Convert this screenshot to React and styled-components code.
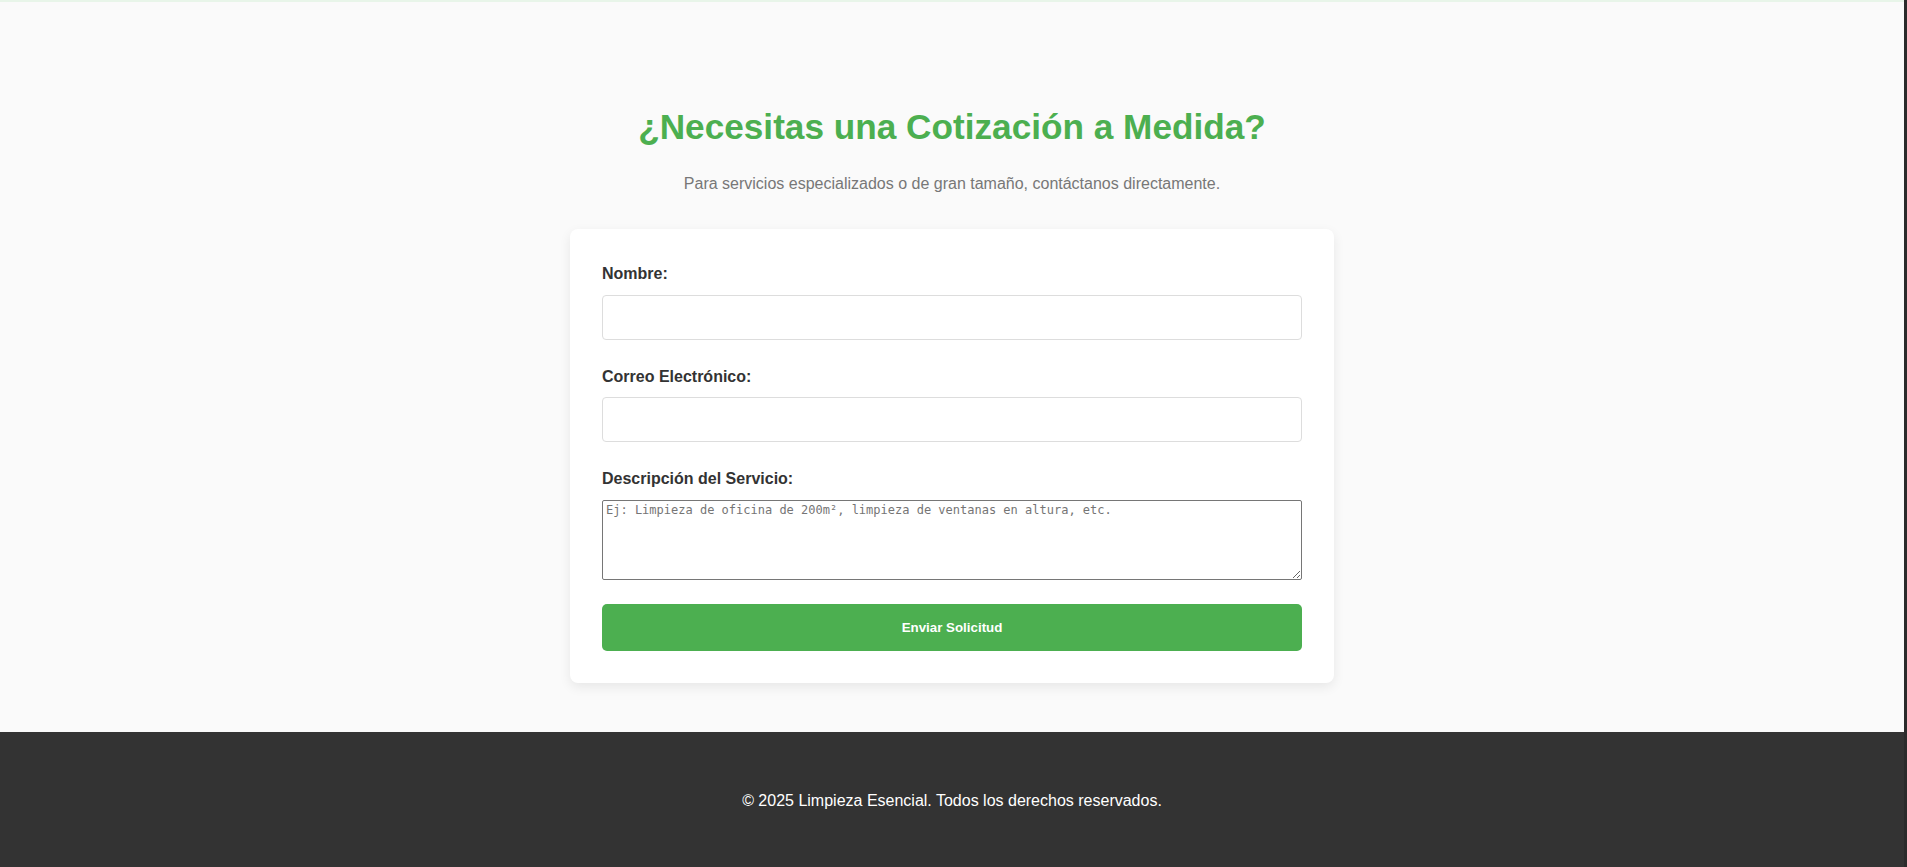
import React from "react";
import styled, { createGlobalStyle } from "styled-components";

const GlobalStyle = createGlobalStyle`
  body {
    margin: 0;
    font-family: "Liberation Sans", Arial, sans-serif;
    line-height: 1.6;
    color: #333;
    background: #fafafa;
  }
  #root {
    border-right: 3px solid #2b2b2b;
  }
`;

const HeroEdge = styled.div`
  height: 2px;
  background: #e8f5e9;
`;

const QuoteSection = styled.section`
  padding: 68px 20px 49px;
  text-align: center;
`;

const Title = styled.h2`
  margin: 29px 0 16px;
  font-size: 2.2em;
  font-weight: bold;
  color: #4caf50;
`;

const Subtitle = styled.p`
  margin: 0 0 32px;
  font-size: 16px;
  color: #777;
`;

const FormCard = styled.form`
  max-width: 700px;
  margin: 0 auto;
  padding: 32px;
  background: #fff;
  border-radius: 8px;
  box-shadow: 0 4px 12px rgba(0, 0, 0, 0.08);
  text-align: left;
`;

const FormGroup = styled.div`
  margin-bottom: 24px;
`;

const Label = styled.label`
  display: block;
  margin-bottom: 8px;
  font-weight: bold;
  font-size: 16px;
  color: #333;
`;

const TextInput = styled.input`
  display: block;
  width: 100%;
  box-sizing: border-box;
  padding: 12px;
  font-family: "Liberation Sans", Arial, sans-serif;
  font-size: 16px;
  line-height: 19px;
  border: 1px solid #ddd;
  border-radius: 4px;
  background: #fff;
`;

const TextArea = styled.textarea`
  display: block;
  width: 100%;
  height: 80px;
  box-sizing: border-box;
  padding: 2px 3px;
  font-family: "DejaVu Sans Mono", monospace;
  font-size: 12px;
  border: 1px solid #767676;
  border-radius: 2px;
  background: #fff;

  &::placeholder {
    color: #757575;
  }
`;

const SubmitButton = styled.button`
  display: block;
  width: 100%;
  padding: 16px;
  border: none;
  border-radius: 5px;
  background: #4caf50;
  color: #fff;
  font-family: "Liberation Sans", Arial, sans-serif;
  font-size: 13.33px;
  font-weight: bold;
  line-height: normal;
  cursor: pointer;
`;

const Footer = styled.footer`
  padding: 40px 20px;
  background: #333;
  color: #fff;
  text-align: center;

  & p {
    margin: 16px 0;
    font-size: 16px;
  }
`;

const App = () => {
  function handleSubmit(e) {
    e.preventDefault();
  }

  return (
    <>
      <GlobalStyle />
      <HeroEdge />
      <QuoteSection>
        <Title>¿Necesitas una Cotización a Medida?</Title>
        <Subtitle>
          Para servicios especializados o de gran tamaño, contáctanos directamente.
        </Subtitle>
        <FormCard onSubmit={handleSubmit}>
          <FormGroup>
            <Label htmlFor="nombre">Nombre:</Label>
            <TextInput id="nombre" type="text" />
          </FormGroup>
          <FormGroup>
            <Label htmlFor="correo">Correo Electrónico:</Label>
            <TextInput id="correo" type="email" />
          </FormGroup>
          <FormGroup>
            <Label htmlFor="descripcion">Descripción del Servicio:</Label>
            <TextArea
              id="descripcion"
              placeholder="Ej: Limpieza de oficina de 200m², limpieza de ventanas en altura, etc."
            />
          </FormGroup>
          <SubmitButton type="submit">Enviar Solicitud</SubmitButton>
        </FormCard>
      </QuoteSection>
      <Footer>
        <p>© 2025 Limpieza Esencial. Todos los derechos reservados.</p>
      </Footer>
    </>
  );
};

export default App;
